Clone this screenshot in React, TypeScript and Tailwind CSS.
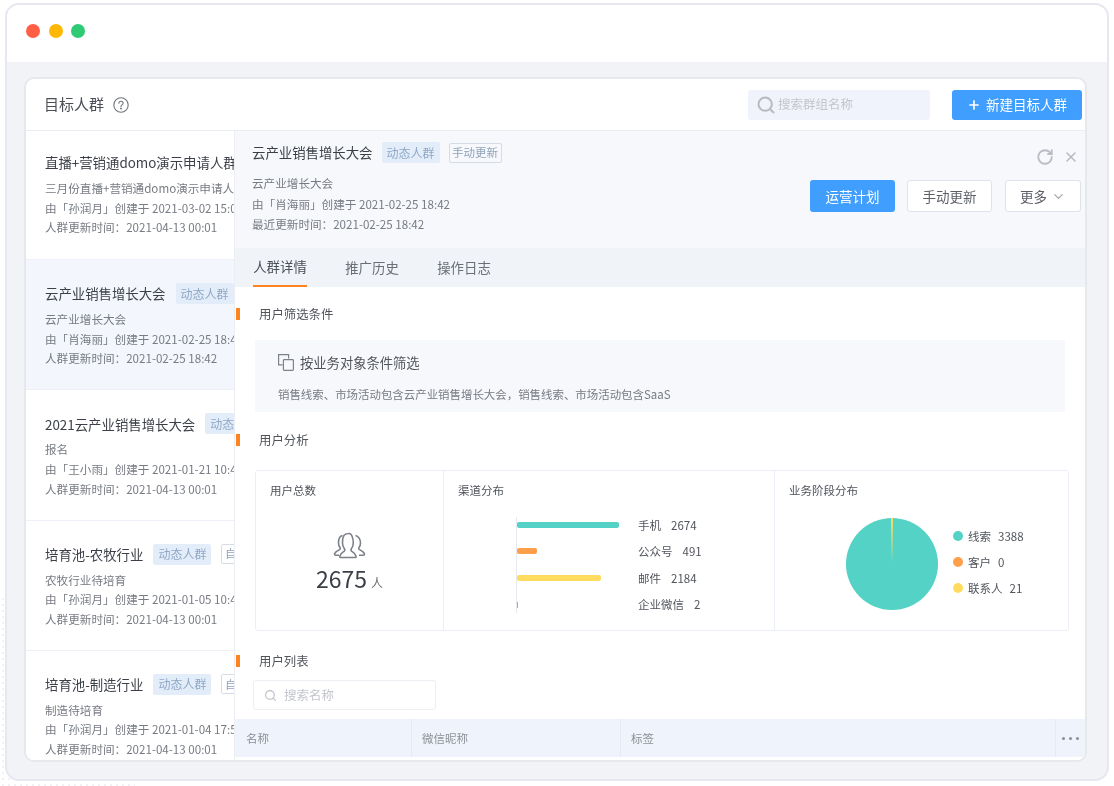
import { ReactNode } from 'react';
import { ChevronDown, Plus, RotateCw, Search, X } from 'lucide-react';

interface Group {
  title: string;
  desc: string;
  creator: string;
  created: string;
  updated: string;
  kind?: string;
  active?: boolean;
}

const GROUPS: Group[] = [
  { title: '直播+营销通domo演示申请人群', desc: '三月份直播+营销通domo演示申请人群', creator: '孙润月', created: '2021-03-02 15:04', updated: '人群更新时间：2021-04-13 00:01', kind: '自动更新' },
  { title: '云产业销售增长大会', desc: '云产业增长大会', creator: '肖海丽', created: '2021-02-25 18:42', updated: '人群更新时间：2021-02-25 18:42', kind: '手动更新', active: true },
  { title: '2021云产业销售增长大会', desc: '报名', creator: '王小雨', created: '2021-01-21 10:42', updated: '人群更新时间：2021-04-13 00:01', kind: '自动更新' },
  { title: '培育池-农牧行业', desc: '农牧行业待培育', creator: '孙润月', created: '2021-01-05 10:47', updated: '人群更新时间：2021-04-13 00:01', kind: '自动更新' },
  { title: '培育池-制造行业', desc: '制造待培育', creator: '孙润月', created: '2021-01-04 17:52', updated: '人群更新时间：2021-04-13 00:01', kind: '自动更新' },
];

const CHANNELS = [
  { label: '手机', value: '2674' },
  { label: '公众号', value: '491' },
  { label: '邮件', value: '2184' },
  { label: '企业微信', value: '2' },
];

const STAGES = [
  { label: '线索', value: '3388', dot: 'bg-[#53d2c5]' },
  { label: '客户', value: '0', dot: 'bg-[#ff9f4a]' },
  { label: '联系人', value: '21', dot: 'bg-[#ffdc60]' },
];

function GroupBadge({ children }: { children: ReactNode }) {
  return (
    <span className="flex h-[21px] w-[58px] shrink-0 items-center justify-center rounded-[2px] bg-[#e3edf9] text-[12px] text-[#8fa8c6]">
      {children}
    </span>
  );
}

function KindBadge({ children }: { children: ReactNode }) {
  return (
    <span className="flex h-[20px] w-[53px] shrink-0 items-center justify-center rounded-[2px] border border-[#d5dce6] text-[11.5px] text-[#8fa3ba]">
      {children}
    </span>
  );
}

function GroupRow({ group, first }: { group: Group; first: boolean }) {
  return (
    <div className={`shrink-0 border-b border-[#edf0f6] pl-[19px] ${first ? 'h-[129px] pt-[21px]' : 'h-[130.25px] pt-[23px]'} ${group.active ? 'bg-[#f3f6fc]' : 'bg-white'}`}>
      <div className="flex h-[21px] items-center gap-[10px] whitespace-nowrap">
        <span className="text-[13.4px] text-[#3b3f47]">{group.title}</span>
        <GroupBadge>动态人群</GroupBadge>
        <KindBadge>{group.kind}</KindBadge>
      </div>
      <div className="mt-[6px] whitespace-nowrap text-[11.6px] leading-[19.7px] text-[#777b83]">
        <div>{group.desc}</div>
        <div>由「{group.creator}」创建于 {group.created}</div>
        <div>{group.updated}</div>
      </div>
    </div>
  );
}

function SectionTitle({ children, className }: { children: ReactNode; className: string }) {
  return (
    <div className={`flex h-[12px] items-center ${className}`}>
      <span className="h-[12px] w-[4px] bg-[#ff8420]" />
      <span className="ml-[19px] text-[12.4px] text-[#50545b]">{children}</span>
    </div>
  );
}

function PeopleIcon() {
  return (
    <svg width="33" height="27" viewBox="0 0 33 27" fill="none" stroke="#7d8189" strokeWidth="1.6" strokeLinejoin="round">
      <path d="M11 25.5H22c.8 0 1.3-.6 1.100-1.300-.6-2.400-2.600-3.600-4.300-4.800-.9-.6-1.100-1.700-.4-2.600 1.200-1.600 1.900-3.500 1.900-5.800 0-4.500-1.700-9.500-3.800-9.500s-3.800 0-5.200 1.500C10 4.500 9.500 8 9.500 11c0 2.300.7 4.200 1.900 5.800.7.900.5 2-.4 2.600-1.700 1.200-3.700 2.400-4.300 4.800-.2.700.3 1.300 1.100 1.300z" />
      <path d="M9.500 3.500C6.500 4 5.500 7.500 5.500 11c0 1.800.5 3.300 1.500 4.600.5.700.3 1.600-.5 2-2 1-4.300 2.200-4.900 4.200-.2.800.3 1.400 1 1.400H6" />
      <path d="M22.500 3.500c3 .5 5 4 5 7.500 0 1.800-.5 3.300-1.500 4.600-.5.700-.3 1.600.5 2 2 1 4.300 2.200 4.900 4.200.2.800-.3 1.400-1 1.400H26" />
    </svg>
  );
}

function ConditionIcon() {
  return (
    <svg width="16" height="17" viewBox="0 0 16 17" fill="none" stroke="#7d8189" strokeWidth="1.200">
      <path d="M10.600 4.500V.6H.6V10.800H4.500" />
      <rect x="5.400" y="5.600" width="10" height="10.800" rx=".8" />
    </svg>
  );
}

function QuestionIcon() {
  return (
    <svg width="16" height="16" viewBox="0 0 16 16" fill="none" stroke="#6f737b" strokeWidth="1.100" strokeLinecap="round">
      <circle cx="8" cy="8" r="7.200" />
      <path d="M5.900 6.300c0-1.200.9-2 2.100-2s2.100.8 2.100 1.900c0 1.700-2.100 1.700-2.100 3.300" />
      <circle cx="8" cy="11.500" r=".4" fill="#6f737b" />
    </svg>
  );
}

export default function App() {
  return (
    <div className="relative h-[786px] w-[1114px] overflow-hidden bg-white pl-[5px] pt-[3px] font-['Noto_Sans_CJK_SC',sans-serif] blur-[0.35px]">
      {/* faint dot texture behind the window, lower left */}
      <div className="absolute bottom-0 left-0 h-[190px] w-[135px] bg-[radial-gradient(#f0f1f6_1px,transparent_1.2px)] bg-[size:6px_6px]" />
      <div className="relative flex h-[778px] w-[1104px] flex-col overflow-hidden rounded-[14px] border-2 border-[#e6e7ef] bg-[#f2f3f7]">
        <div className="flex h-[57px] shrink-0 items-start gap-[8.5px] bg-white pl-[19px] pt-[19px]">
          <span className="size-[14px] rounded-full bg-[#ff5f45]" />
          <span className="size-[14px] rounded-full bg-[#ffb806]" />
          <span className="size-[14px] rounded-full bg-[#2ecb74]" />
        </div>

        <div className="ml-[17px] mt-[15px] flex h-[685px] w-[1063px] shrink-0 flex-col overflow-hidden rounded-[10px] border-2 border-[#e7e8ec] bg-white">
          <div className="flex h-[52px] shrink-0 items-center border-b border-[#e9edf4] pl-[18px] pr-[3px]">
            <span className="text-[15px] text-[#4a4e55]">目标人群</span>
            <span className="ml-[9px]"><QuestionIcon /></span>
            <div className="ml-auto flex h-[30px] w-[182px] items-center rounded-[3px] bg-[#f0f3fb] pl-[8px]">
              <Search size={20} strokeWidth={2.400} className="text-[#b7bac1]" />
              <span className="ml-[2px] text-[12.500px] text-[#c3c6cd]">搜索群组名称</span>
            </div>
            <button className="ml-[22px] flex h-[30px] w-[130px] items-center justify-center gap-[5px] rounded-[3px] bg-[#409eff] text-[13.500px] text-white">
              <Plus size={14} strokeWidth={2.800} />
              新建目标人群
            </button>
          </div>

          <div className="flex min-h-0 flex-1">
            <div className="flex w-[209px] shrink-0 flex-col overflow-hidden border-r border-[#eceef3]">
              {GROUPS.map((g, i) => <GroupRow key={g.title} group={g} first={i === 0} />)}
            </div>

            <div className="flex min-w-0 flex-1 flex-col">
              <div className="relative flex h-[117px] shrink-0 bg-[#f6f8fc] pl-[17px] pt-[11px]">
                <div>
                  <div className="flex h-[21px] items-center whitespace-nowrap">
                    <span className="text-[13.400px] text-[#3b3f47]">云产业销售增长大会</span>
                    <span className="ml-[9px]"><GroupBadge>动态人群</GroupBadge></span>
                    <span className="ml-[9px]"><KindBadge>手动更新</KindBadge></span>
                  </div>
                  <div className="mt-[10px] text-[11.600px] leading-[20.700px] text-[#777b83]">
                    <div>云产业增长大会</div>
                    <div>由「肖海丽」创建于 2021-02-25 18:42</div>
                    <div>最近更新时间：2021-02-25 18:42</div>
                  </div>
                </div>
                <div className="ml-auto flex flex-col items-end pr-[4px]">
                  <div className="mr-[2px] mt-[6px] flex items-center gap-[9px] text-[#b9bcc3]">
                    <RotateCw size={18} strokeWidth={2.400} />
                    <X size={16} strokeWidth={2.400} />
                  </div>
                  <div className="mt-[14px] flex">
                    <button className="h-[32px] w-[85px] rounded-[3px] bg-[#409eff] text-[13.500px] text-white">运营计划</button>
                    <button className="ml-[12px] h-[32px] w-[85px] rounded-[3px] border border-[#dfe2e8] bg-white text-[13.500px] text-[#5c6067]">手动更新</button>
                    <button className="ml-[13px] flex h-[32px] w-[76px] items-center justify-center gap-[4px] rounded-[3px] border border-[#dfe2e8] bg-white text-[13.500px] text-[#5c6067]">
                      更多 <ChevronDown size={15} className="text-[#a3a7ae]" />
                    </button>
                  </div>
                </div>
              </div>

              <div className="flex h-[39px] shrink-0 gap-[38px] bg-[#f0f3f8] pl-[18px] text-[13.400px] text-[#6a6e75]">
                <span className="flex h-full w-[54px] items-center justify-center whitespace-nowrap border-b-2 border-[#ff8420] text-[#4a4e55]">人群详情</span>
                <span className="flex h-full w-[54px] items-center justify-center whitespace-nowrap">推广历史</span>
                <span className="flex h-full w-[54px] items-center justify-center whitespace-nowrap">操作日志</span>
              </div>

              <div className="flex min-h-0 flex-1 flex-col bg-white pl-px">
                <SectionTitle className="mt-[21px]">用户筛选条件</SectionTitle>
                <div className="ml-[19px] mt-[20px] h-[72px] w-[810px] shrink-0 bg-[#f7f8fb] pl-[23px] pt-[13px]">
                  <div className="flex items-center gap-[6px]">
                    <ConditionIcon />
                    <span className="text-[13.300px] text-[#50545b]">按业务对象条件筛选</span>
                  </div>
                  <div className="mt-[13px] whitespace-nowrap text-[11.450px] text-[#777b83]">销售线索、市场活动包含云产业销售增长大会，销售线索、市场活动包含SaaS</div>
                </div>

                <SectionTitle className="mt-[22px]">用户分析</SectionTitle>
                <div className="ml-[19px] mt-[24px] flex h-[161px] w-[814px] shrink-0 rounded-[3px] border border-[#ebeef6]">
                  <div className="w-[188px] shrink-0 border-r border-[#ebeef6] pl-[14px] pt-[11px]">
                    <span className="block text-[11.500px] text-[#50545b]">用户总数</span>
                    <div className="ml-[-14px] mt-[33px] flex flex-col items-center">
                      <PeopleIcon />
                      <div className="mt-[5px] flex items-baseline gap-[4px] text-[#3b3f47]">
                        <span className="text-[23px] leading-[28px]">2675</span>
                        <span className="text-[12px] text-[#6a6e75]">人</span>
                      </div>
                    </div>
                  </div>

                  <div className="w-[331px] shrink-0 border-r border-[#ebeef6] pl-[14px] pt-[11px]">
                    <span className="block text-[11.500px] text-[#50545b]">渠道分布</span>
                    <div className="ml-[58px] mt-[17.750px] flex">
                      <svg width="104" height="96" viewBox="0 0 104 96">
                        <line x1="0.500" y1="0" x2="0.500" y2="96" stroke="#e6e9f0" />
                        <rect x="1" y="5" width="102" height="6" rx="2" fill="#53d2c5" />
                        <rect x="1" y="31" width="20" height="6" rx="2" fill="#ff9f4a" />
                        <rect x="1" y="58" width="84" height="6" rx="2" fill="#ffdc60" />
                        <rect x="1" y="85" width="1" height="6" fill="#7fb4f0" />
                      </svg>
                      <div className="ml-[18px] mt-[-2px] flex flex-col gap-[6.300px] text-[11.500px] leading-[20px] text-[#50545b]">
                        {CHANNELS.map((c) => (
                          <div key={c.label} className="flex gap-[10px] whitespace-nowrap">
                            <span>{c.label}</span>
                            <span>{c.value}</span>
                          </div>
                        ))}
                      </div>
                    </div>
                  </div>

                  <div className="min-w-0 flex-1 pl-[14px] pt-[11px]">
                    <span className="block text-[11.500px] text-[#50545b]">业务阶段分布</span>
                    <div className="ml-[57px] mt-[18.750px] flex items-center">
                      <svg width="92" height="92" viewBox="0 0 92 92">
                        <circle cx="46" cy="46" r="46" fill="#53d2c5" />
                        <path d="M46 46 L45 0 L47 0 Z" fill="#ffdc60" />
                      </svg>
                      <div className="mb-[4px] ml-[15px] flex flex-col gap-[6px] text-[11.500px] leading-[20px] text-[#50545b]">
                        {STAGES.map((s) => (
                          <div key={s.label} className="flex items-center whitespace-nowrap">
                            <span className={`size-[10px] rounded-full ${s.dot}`} />
                            <span className="ml-[5px]">{s.label}</span>
                            <span className="ml-[7px]">{s.value}</span>
                          </div>
                        ))}
                      </div>
                    </div>
                  </div>
                </div>

                <SectionTitle className="mt-[24px]">用户列表</SectionTitle>
                <div className="ml-[17px] mt-[13px] flex h-[30px] w-[183px] shrink-0 items-center gap-[7px] rounded-[3px] border border-[#eceef3] pl-[10px]">
                  <Search size={13} className="text-[#b9bcc3]" />
                  <span className="text-[12.500px] text-[#c3c6cd]">搜索名称</span>
                </div>
                <div className="ml-[-1px] mt-[9px] flex h-[38px] shrink-0 items-center bg-[#eff3fb] text-[11.500px] text-[#8b8f96]">
                  <span className="flex h-full w-[177px] items-center border-r border-[#e6eaf3] pl-[11px] pt-[2px]">名称</span>
                  <span className="flex h-full w-[209px] items-center border-r border-[#e6eaf3] pl-[10px] pt-[2px]">微信昵称</span>
                  <span className="flex h-full w-[435px] items-center border-r border-[#e6eaf3] pl-[10px] pt-[2px]">标签</span>
                  <span className="ml-[6px] flex gap-[4px]">
                    <i className="size-[3px] rounded-full bg-[#8b8f96]" />
                    <i className="size-[3px] rounded-full bg-[#8b8f96]" />
                    <i className="size-[3px] rounded-full bg-[#8b8f96]" />
                  </span>
                </div>
              </div>
            </div>
          </div>
        </div>
      </div>
    </div>
  );
}
